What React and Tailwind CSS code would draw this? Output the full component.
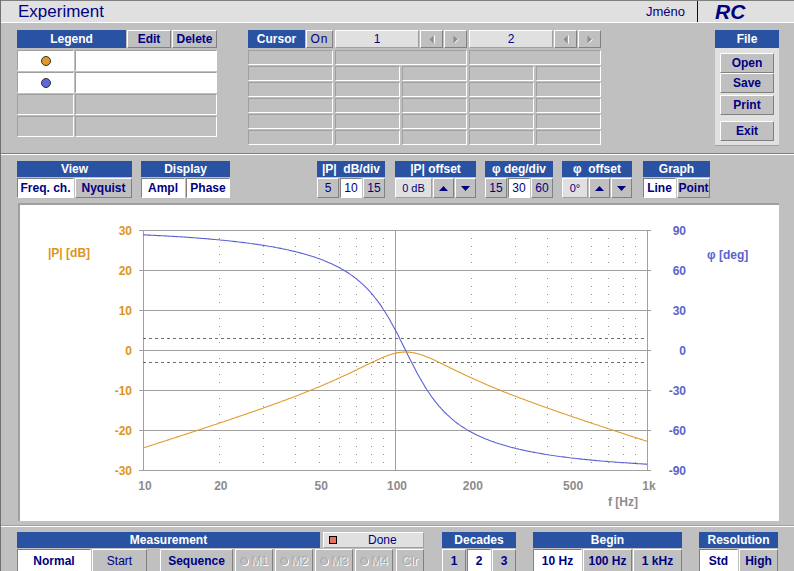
import React from 'react'

const raised = 'bg-[#c0c0c0] border border-t-white border-l-white border-b-[#808080] border-r-[#808080]'
const pressed = 'bg-white border border-t-[#808080] border-l-[#808080] border-b-white border-r-white'
const cell = 'border border-t-[#a0a0a0] border-l-[#a0a0a0] border-b-white border-r-white'
const field = 'bg-[#e0e0e0] border border-t-white border-l-white border-b-[#a0a0a0] border-r-[#a0a0a0]'

function Head({ className = '', children }){
  return (
    <div className={`h-[16px] bg-[#2a52a3] text-white text-[12px] font-bold leading-none flex items-center justify-center whitespace-pre ${className}`}>
      {children}
    </div>
  )
}

function Btn({ className = '', on, bold = true, children }){
  return (
    <div className={`h-full flex items-center justify-center text-[12px] leading-none text-[#000080] whitespace-pre ${bold ? 'font-bold' : ''} ${on ? pressed : raised} ${className}`}>
      {children}
    </div>
  )
}

const ArrowL = () => (
  <svg width="6" height="9" viewBox="0 0 6 9"><polygon points="4.5,0.5 4.5,8.5 0.5,4.5" fill="#8c8c8c" /><line x1="5.5" y1="0.5" x2="5.5" y2="8.5" stroke="#fff" /></svg>
)
const ArrowR = () => (
  <svg width="6" height="9" viewBox="0 0 6 9"><polygon points="0.5,0.5 0.5,8.5 4.5,4.5" fill="#8c8c8c" /><line x1="1.5" y1="8" x2="5.5" y2="4.5" stroke="#fff" /></svg>
)
const Up = () => (
  <svg width="9" height="5" viewBox="0 0 9 5"><polygon points="0,5 9,5 4.5,0" fill="#000080" /></svg>
)
const Down = () => (
  <svg width="9" height="5" viewBox="0 0 9 5"><polygon points="0,0 9,0 4.5,5" fill="#000080" /></svg>
)

function Dot({ color }){
  return <span className={`w-[10px] h-[10px] rounded-full border border-[#303030] ${color}`} />
}

function Disabled({ className = '', children }){
  return (
    <div className={`h-full flex items-center justify-center gap-[3px] text-[12px] leading-none text-[#a8a8a8] [text-shadow:1px_1px_0_#ffffff] ${raised} ${className}`}>
      {children}
    </div>
  )
}

const Mbtn = ({ label }) => (
  <Disabled className="w-[38px] ml-[2px]">
    <span className="w-[8px] h-[8px] rounded-full border border-[#a8a8a8] shadow-[1px_1px_0_#fff]" />
    {label}
  </Disabled>
)

// ---------- chart ----------
const X = (f) => 143 + 252 * Math.log10(f / 10)
const yDb = (d) => 350 - d * 4
const yPh = (p) => 350 - (p * 4) / 3

function curves(){
  const Q = 1.45
  const f0 = 110
  const mag = []
  const ph = []
  for (let i = 0; i <= 300; i++){
    const f = 10 * Math.pow(100, i / 300)
    const u = Q * (f / f0 - f0 / f)
    const db = -10 * Math.log10(1 + u * u) - 0.5
    const deg = (-Math.atan(u) * 180) / Math.PI
    mag.push(`${X(f).toFixed(1)},${yDb(db).toFixed(1)}`)
    ph.push(`${X(f).toFixed(1)},${yPh(deg).toFixed(1)}`)
  }
  return { mag: mag.join(' '), ph: ph.join(' ') }
}

function Chart(){
  const { mag, ph } = curves()
  const dotted = [20, 30, 40, 50, 60, 70, 80, 90, 200, 300, 400, 500, 600, 700, 800, 900]
  const levels = [30, 20, 10, 0, -10, -20, -30]
  const xLabels = [[10, '10'], [20, '20'], [50, '50'], [100, '100'], [200, '200'], [500, '500'], [1000, '1k']]
  return (
    <svg width="759" height="316" viewBox="20 205 759 316" className="block" fontFamily="'Liberation Sans', Arial, sans-serif" fontWeight="bold" fontSize="12">
      {dotted.map((f) => (
        <line key={f} x1={Math.round(X(f)) + 0.5} x2={Math.round(X(f)) + 0.5} y1={230} y2={470} stroke="#8c8c8c" strokeDasharray="1 7" />
      ))}
      {levels.map((d) => (
        <line key={d} x1={139} x2={651} y1={yDb(d) + 0.5} y2={yDb(d) + 0.5} stroke="#a0a0a0" />
      ))}
      {[143, 395, 647].map((x) => (
        <line key={x} x1={x + 0.5} x2={x + 0.5} y1={230} y2={471} stroke="#a0a0a0" />
      ))}
      <line x1={143} x2={645} y1={338.5} y2={338.5} stroke="#707070" strokeDasharray="3 3" />
      <line x1={143} x2={645} y1={362.5} y2={362.5} stroke="#707070" strokeDasharray="3 3" />
      <polyline points={ph} fill="none" stroke="#5a60d4" strokeWidth="1.1" />
      <polyline points={mag} fill="none" stroke="#e09a28" strokeWidth="1.1" />
      {levels.map((d) => (
        <text key={d} x={132} y={yDb(d) + 5} textAnchor="end" fill="#dc9420">{d}</text>
      ))}
      {levels.map((d) => (
        <text key={d} x={686} y={yDb(d) + 5} textAnchor="end" fill="#5a64cc">{d * 3}</text>
      ))}
      {xLabels.map(([f, t]) => (
        <text key={t} x={X(f) + 2} y={490} textAnchor="middle" fill="#8c8c8c">{t}</text>
      ))}
      <text x={608} y={506} fill="#8c8c8c">f [Hz]</text>
      <text x={48} y={257} fill="#dc9420">|P| [dB]</text>
      <text x={707} y={259} fill="#5a64cc">φ [deg]</text>
    </svg>
  )
}

export default function App(){
  return (
    <div className="w-[794px] h-[571px] overflow-hidden bg-[#c0c0c0] border-l border-[#707070] flex flex-col font-['Liberation_Sans',Arial,sans-serif] select-none">
      {/* title bar */}
      <div className="h-[23px] shrink-0 flex items-center bg-[#e0e0e0] border-t border-t-[#808080] border-b border-b-white">
        <span className="pl-[17px] text-[17px] leading-none text-[#000080]">Experiment</span>
        <span className="ml-auto text-[13px] leading-none text-[#000080]">Jméno</span>
        <span className="ml-[12px] w-px h-full bg-[#000080]" />
        <span className="w-[96px] pl-[17px] text-[21px] leading-none font-bold italic text-[#000080]">RC</span>
      </div>

      {/* top section */}
      <div className="h-[130px] shrink-0 flex items-start pl-[16px] pt-[7px]">
        {/* legend */}
        <div className="w-[200px] flex flex-col">
          <div className="h-[18px] flex gap-[1px]">
            <Head className="w-[109px] h-full">Legend</Head>
            <Btn className="w-[44px]">Edit</Btn>
            <Btn className="w-[45px]">Delete</Btn>
          </div>
          <div className="mt-[2px] flex flex-col gap-[1px]">
            {[0, 1, 2, 3].map((i) => (
              <div key={i} className="h-[21px] flex gap-[1px]">
                <div className={`w-[57px] flex items-center justify-center ${cell} ${i < 2 ? 'bg-white' : ''}`}>
                  {i === 0 ? <Dot color="bg-[#e09a28]" /> : null}
                  {i === 1 ? <Dot color="bg-[#6068dc]" /> : null}
                </div>
                <div className={`flex-1 ${cell} ${i < 2 ? 'bg-white' : ''}`} />
              </div>
            ))}
          </div>
        </div>

        {/* cursor */}
        <div className="ml-[31px] w-[353px] flex flex-col">
          <div className="h-[18px] flex">
            <Head className="w-[57px] h-full">Cursor</Head>
            <Btn className="w-[27px] ml-[1px] tracking-[1px]" bold={false}>On</Btn>
            <div className={`w-[84px] ml-[2px] flex items-center justify-center text-[12px] text-[#000080] ${field}`}>1</div>
            <Btn className="w-[23px] ml-[1px]"><ArrowL /></Btn>
            <Btn className="w-[23px] ml-[1px]"><ArrowR /></Btn>
            <div className={`w-[84px] ml-[2px] flex items-center justify-center text-[12px] text-[#000080] ${field}`}>2</div>
            <Btn className="w-[23px] ml-[1px]"><ArrowL /></Btn>
            <Btn className="w-[23px] ml-[1px]"><ArrowR /></Btn>
          </div>
          <div className="mt-[2px] flex flex-col gap-[1px]">
            <div className="h-[15px] flex gap-[2px]">
              <div className={`w-[85px] ${cell}`} />
              <div className={`w-[132px] ${cell}`} />
              <div className={`w-[132px] ${cell}`} />
            </div>
            {[0, 1, 2, 3, 4].map((i) => (
              <div key={i} className="h-[15px] flex gap-[2px]">
                <div className={`w-[85px] ${cell}`} />
                <div className={`w-[65px] ${cell}`} />
                <div className={`w-[65px] ${cell}`} />
                <div className={`w-[65px] ${cell}`} />
                <div className={`w-[65px] ${cell}`} />
              </div>
            ))}
          </div>
        </div>

        {/* file */}
        <div className="ml-auto mr-[15px] w-[64px] flex flex-col">
          <Head className="h-[18px]">File</Head>
          <div className="h-[98px] bg-[#e0e0e0] border-b border-[#a0a0a0] pt-[5px] pl-[5px] flex flex-col">
            <Btn className="w-[54px] !h-[20px]">Open</Btn>
            <Btn className="w-[54px] !h-[20px]">Save</Btn>
            <Btn className="w-[54px] !h-[20px] mt-[2px]">Print</Btn>
            <Btn className="w-[54px] !h-[20px] mt-[6px]">Exit</Btn>
          </div>
        </div>
      </div>

      <div className="h-px shrink-0 bg-[#808080]" />
      <div className="h-px shrink-0 bg-white" />

      {/* controls row */}
      <div className="h-[48px] shrink-0 flex items-start pl-[16px] pt-[6px]">
        <div className="w-[115px] flex flex-col">
          <Head>View</Head>
          <div className="mt-[1px] h-[20px] flex gap-[1px]">
            <Btn on className="w-[57px]">Freq. ch.</Btn>
            <Btn className="w-[57px]">Nyquist</Btn>
          </div>
        </div>
        <div className="ml-[9px] w-[89px] flex flex-col">
          <Head>Display</Head>
          <div className="mt-[1px] h-[20px] flex gap-[1px]">
            <Btn on className="w-[44px]">Ampl</Btn>
            <Btn on className="w-[44px]">Phase</Btn>
          </div>
        </div>
        <div className="ml-[87px] w-[68px] flex flex-col">
          <Head>{'|P|  dB/div'}</Head>
          <div className="mt-[1px] h-[20px] flex gap-[1px]">
            <Btn bold={false} className="w-[22px]">5</Btn>
            <Btn bold={false} on className="w-[22px]">10</Btn>
            <Btn bold={false} className="w-[22px]">15</Btn>
          </div>
        </div>
        <div className="ml-[10px] w-[81px] flex flex-col">
          <Head>|P| offset</Head>
          <div className="mt-[1px] h-[20px] flex gap-[1px]">
            <div className={`w-[37px] flex items-center justify-center text-[11px] text-[#000080] ${field}`}>0 dB</div>
            <Btn className="w-[21px]"><Up /></Btn>
            <Btn className="w-[21px]"><Down /></Btn>
          </div>
        </div>
        <div className="ml-[9px] w-[68px] flex flex-col">
          <Head>φ deg/div</Head>
          <div className="mt-[1px] h-[20px] flex gap-[1px]">
            <Btn bold={false} className="w-[22px]">15</Btn>
            <Btn bold={false} on className="w-[22px]">30</Btn>
            <Btn bold={false} className="w-[22px]">60</Btn>
          </div>
        </div>
        <div className="ml-[9px] w-[70px] flex flex-col">
          <Head>φ  offset</Head>
          <div className="mt-[1px] h-[20px] flex gap-[1px]">
            <div className={`w-[26px] flex items-center justify-center text-[11px] text-[#000080] ${field}`}>0°</div>
            <Btn className="w-[21px]"><Up /></Btn>
            <Btn className="w-[21px]"><Down /></Btn>
          </div>
        </div>
        <div className="ml-[11px] w-[67px] flex flex-col">
          <Head>Graph</Head>
          <div className="mt-[1px] h-[20px] flex gap-[1px]">
            <Btn on className="w-[33px]">Line</Btn>
            <Btn className="w-[33px]">Point</Btn>
          </div>
        </div>
      </div>

      {/* chart */}
      <div className="h-[318px] shrink-0 pl-[17px]">
        <div className="w-[761px] h-full bg-white border-t-2 border-l-2 border-[#a0a0a0]">
          <Chart />
        </div>
      </div>

      <div className="h-[4px] shrink-0" />
      <div className="h-px shrink-0 bg-[#a0a0a0]" />
      <div className="h-px shrink-0 bg-white" />

      {/* bottom */}
      <div className="flex-1 flex items-start pl-[16px] pt-[5px]">
        <div className="w-[407px] flex flex-col">
          <div className="h-[16px] flex">
            <Head className="w-[303px]">Measurement</Head>
            <div className={`ml-[3px] w-[101px] flex items-center ${field}`}>
              <span className="ml-[5px] w-[8px] h-[8px] border border-black bg-[#f07060]" />
              <span className="ml-[31px] text-[12px] leading-none text-[#000080]">Done</span>
            </div>
          </div>
          <div className="mt-[1px] h-[23px] flex">
            <Btn on className="w-[74px]">Normal</Btn>
            <Btn bold={false} className="w-[55px] ml-[1px]">Start</Btn>
            <Btn className="w-[73px] ml-[13px]">Sequence</Btn>
            <Mbtn label="M1" />
            <Mbtn label="M2" />
            <Mbtn label="M3" />
            <Mbtn label="M4" />
            <Disabled className="w-[28px] ml-[3px]">Clr</Disabled>
          </div>
        </div>
        <div className="ml-[18px] w-[74px] flex flex-col">
          <Head>Decades</Head>
          <div className="mt-[1px] h-[23px] flex gap-[1px]">
            <Btn className="w-[24px]">1</Btn>
            <Btn on className="w-[24px]">2</Btn>
            <Btn className="w-[24px]">3</Btn>
          </div>
        </div>
        <div className="ml-[17px] w-[149px] flex flex-col">
          <Head>Begin</Head>
          <div className="mt-[1px] h-[23px] flex gap-[1px]">
            <Btn on className="w-[49px]">10 Hz</Btn>
            <Btn className="w-[49px]">100 Hz</Btn>
            <Btn className="w-[49px]">1 kHz</Btn>
          </div>
        </div>
        <div className="ml-[17px] w-[79px] flex flex-col">
          <Head>Resolution</Head>
          <div className="mt-[1px] h-[23px] flex gap-[1px]">
            <Btn on className="w-[39px]">Std</Btn>
            <Btn className="w-[39px]">High</Btn>
          </div>
        </div>
      </div>
    </div>
  )
}
